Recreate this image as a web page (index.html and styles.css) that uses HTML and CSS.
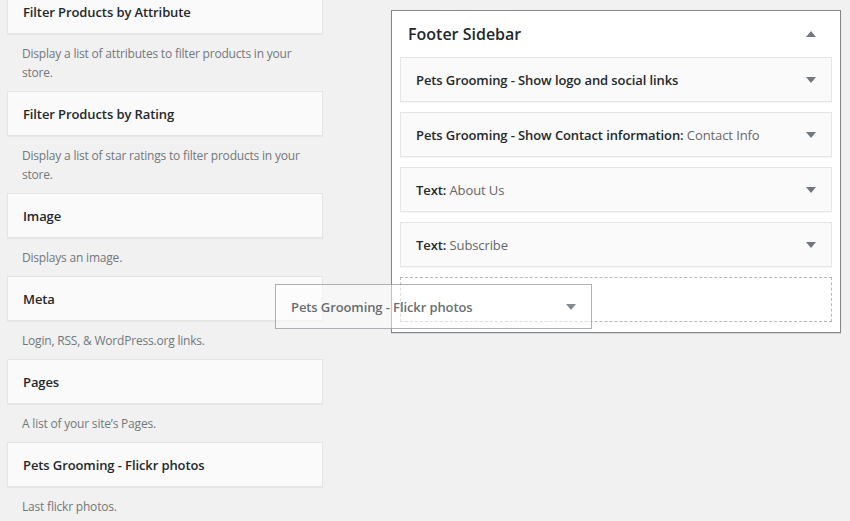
FILE: index.html
```html
<!DOCTYPE html>
<html>
<head>
<meta charset="utf-8">
<link rel="stylesheet" href="styles.css">
</head>
<body>
<div class="page">
  <div class="available">
    <div class="widget"><div class="widget-top"><h3>Filter Products by Attribute</h3></div></div>
    <p class="desc">Display a list of attributes to filter products in your store.</p>
    <div class="widget"><div class="widget-top"><h3>Filter Products by Rating</h3></div></div>
    <p class="desc">Display a list of star ratings to filter products in your store.</p>
    <div class="widget"><div class="widget-top"><h3>Image</h3></div></div>
    <p class="desc">Displays an image.</p>
    <div class="widget"><div class="widget-top"><h3>Meta</h3></div></div>
    <p class="desc">Login, RSS, &amp; WordPress.org links.</p>
    <div class="widget"><div class="widget-top"><h3>Pages</h3></div></div>
    <p class="desc">A list of your site’s Pages.</p>
    <div class="widget"><div class="widget-top"><h3>Pets Grooming - Flickr photos</h3></div></div>
    <p class="desc">Last flickr photos.</p>
  </div>

  <div class="sidebar">
    <div class="sidebar-name">
      <h2>Footer Sidebar</h2>
      <svg class="arrow" width="10" height="6" viewBox="0 0 10 6"><polygon points="0,6 10,6 5,0" fill="#72777c"/></svg>
    </div>
    <div class="sidebar-widgets">
      <div class="widget"><div class="widget-top"><h3>Pets Grooming - Show logo and social links</h3>
        <svg class="arrow" width="10" height="6" viewBox="0 0 10 6"><polygon points="0,0 10,0 5,6" fill="#72777c"/></svg></div></div>
      <div class="widget"><div class="widget-top"><h3>Pets Grooming - Show Contact information: <span class="in-title">Contact Info</span></h3>
        <svg class="arrow" width="10" height="6" viewBox="0 0 10 6"><polygon points="0,0 10,0 5,6" fill="#72777c"/></svg></div></div>
      <div class="widget"><div class="widget-top"><h3>Text: <span class="in-title">About Us</span></h3>
        <svg class="arrow" width="10" height="6" viewBox="0 0 10 6"><polygon points="0,0 10,0 5,6" fill="#72777c"/></svg></div></div>
      <div class="widget"><div class="widget-top"><h3>Text: <span class="in-title">Subscribe</span></h3>
        <svg class="arrow" width="10" height="6" viewBox="0 0 10 6"><polygon points="0,0 10,0 5,6" fill="#72777c"/></svg></div></div>
      <div class="placeholder"></div>
    </div>
  </div>
</div>

<div class="helper">
  <div class="widget-top"><h3>Pets Grooming - Flickr photos</h3>
    <svg class="arrow" width="10" height="6" viewBox="0 0 10 6"><polygon points="0,0 10,0 5,6" fill="#72777c"/></svg></div>
</div>
</body>
</html>
```

FILE: styles.css
```css
html, body {
  margin: 0;
  padding: 0;
}
body {
  background: #f1f1f1;
  font-family: "Open Sans", "Noto Sans", sans-serif;
  font-size: 13px;
  color: #444;
  width: 850px;
  height: 521px;
  overflow: hidden;
  position: relative;
}
.page {
  display: flex;
  align-items: flex-start;
  padding-left: 7px;
}
.available {
  width: 316px;
  margin-top: -11px;
}
.widget {
  background: #fafafa;
  border: 1px solid #e5e5e5;
  box-shadow: 0 1px 1px rgba(0, 0, 0, 0.04);
}
.widget-top {
  height: 43px;
  display: flex;
  align-items: center;
  justify-content: space-between;
  padding: 0 15px;
}
.widget-top h3 {
  margin: 0;
  font-size: 13px;
  font-weight: 600;
  letter-spacing: -0.1px;
  color: #23282d;
  white-space: nowrap;
}
.in-title {
  font-weight: 400;
  color: #666;
}
.desc {
  margin: 0;
  padding: 10px 15px 9px;
  font-size: 12px;
  letter-spacing: -0.2px;
  line-height: 19px;
  color: #72777c;
}
.sidebar {
  margin-left: 68px;
  margin-top: 10px;
  width: 448px;
  background: #fff;
  border: 1px solid #82878c;
  box-shadow: 0 1px 1px rgba(0, 0, 0, 0.1);
}
.sidebar-name {
  height: 46px;
  display: flex;
  align-items: center;
  justify-content: space-between;
  padding: 0 24px 0 16px;
}
.sidebar-name h2 {
  margin: 0;
  font-size: 16px;
  font-weight: 600;
  color: #23282d;
}
.sidebar-widgets {
  padding: 0 8px 10px;
  display: flex;
  flex-direction: column;
  gap: 10px;
}
.placeholder {
  height: 43px;
  border: 1px dashed #b4b9be;
}
.helper {
  position: absolute;
  left: 275px;
  top: 284px;
  width: 315px;
  background: rgba(255, 255, 255, 0.6);
  border: 1px solid #a0a5aa;
  opacity: 0.85;
}
.helper .widget-top h3 {
  font-weight: 600;
  color: #50555a;
}
```
